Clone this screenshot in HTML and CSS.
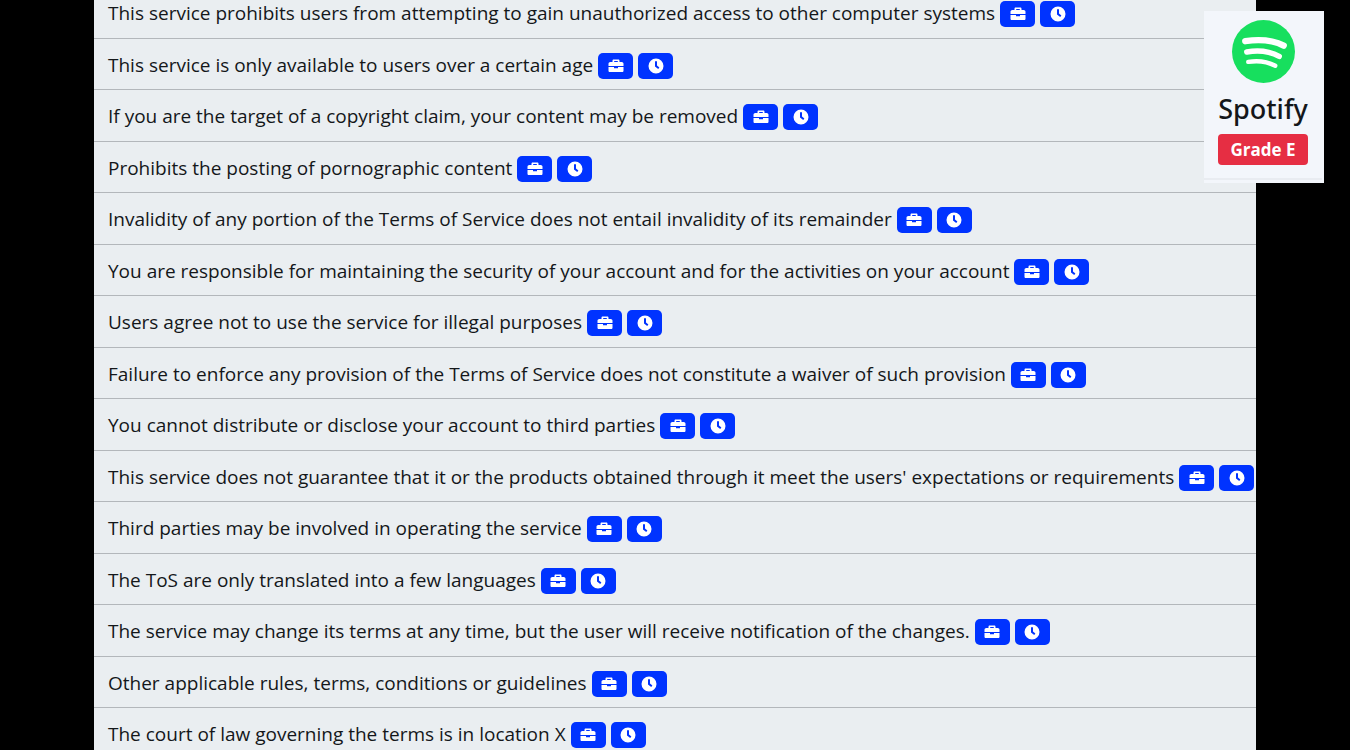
FILE: index.html
```
<!DOCTYPE html>
<html lang="en">
<head>
  <meta charset="UTF-8">
  <meta name="viewport" content="width=device-width, initial-scale=1.0">
  <title>Spotify - Terms of Service</title>
  <link rel="stylesheet" href="styles.css">
</head>
<body>
  <!-- Icons shared by all the points -->
  <svg class="icon-defs" xmlns="http://www.w3.org/2000/svg">
    <symbol id="briefcase" viewBox="0 0 16 16">
      <path fill-rule="evenodd" d="M4.500 4V2.700C4.500 2 5 1.500 5.700 1.500h4.600c.7 0 1.200.5 1.200 1.200V4h2.200c1 0 1.800.8 1.800 1.800V8H.5V5.800C.5 4.800 1.300 4 2.300 4zM6.200 4h3.600V3H6.200z" />
      <path d="M.5 9H6v1.200h4V9h5.500v3.700c0 .7-.5 1.300-1.300 1.300H1.800C1 14 .5 13.400.5 12.700z" />
    </symbol>
    <symbol id="clock" viewBox="0 0 16 16">
      <path fill-rule="evenodd" d="M8 .5a7.500 7.500 0 1 1 0 15 7.500 7.500 0 0 1 0-15zM7 3.300v5.200l3.200 2.400 1.200-1.500L9 7.600V3.300z" />
    </symbol>
  </svg>

  <ul class="points" id="pointList"></ul>

  <div class="service-card">
    <svg class="service-logo" viewBox="0 0 64 64" role="img" aria-label="Spotify logo">
      <circle cx="32" cy="32" r="32" fill="#17df5e" />
      <g fill="none" stroke="#fff" stroke-linecap="round">
        <path stroke-width="6.500" d="M13.500 21.500c14-2 27-1.600 39 4.500" />
        <path stroke-width="5.500" d="M15 32.500c12-2.200 22.500-1.200 33 4.500" />
        <path stroke-width="4.500" d="M16.500 42.500c10-1.600 18.500-.8 27.500 4" />
      </g>
    </svg>
    <h1 class="service-name">Spotify</h1>
    <span class="grade">Grade E</span>
  </div>

  <script>
    const points = [
      "This service prohibits users from attempting to gain unauthorized access to other computer systems",
      "This service is only available to users over a certain age",
      "If you are the target of a copyright claim, your content may be removed",
      "Prohibits the posting of pornographic content",
      "Invalidity of any portion of the Terms of Service does not entail invalidity of its remainder",
      "You are responsible for maintaining the security of your account and for the activities on your account",
      "Users agree not to use the service for illegal purposes",
      "Failure to enforce any provision of the Terms of Service does not constitute a waiver of such provision",
      "You cannot distribute or disclose your account to third parties",
      "This service does not guarantee that it or the products obtained through it meet the users' expectations or requirements",
      "Third parties may be involved in operating the service",
      "The ToS are only translated into a few languages",
      "The service may change its terms at any time, but the user will receive notification of the changes.",
      "Other applicable rules, terms, conditions or guidelines",
      "The court of law governing the terms is in location X"
    ];

    const pointList = document.getElementById("pointList");

    points.forEach((text) => {
      const item = document.createElement("li");
      item.className = "point";
      item.innerHTML = `
        <span class="point-text">${text}</span>
        <span class="badge"><svg><use href="#briefcase" /></svg></span>
        <span class="badge"><svg><use href="#clock" /></svg></span>
      `;
      pointList.appendChild(item);
    });
  </script>
</body>
</html>
```

FILE: styles.css
```
body {
  font-family: "Open Sans", "Noto Sans", sans-serif;
  margin: 0;
  height: 100vh;
  overflow: hidden;
  background-color: #000;
  color: #14171a;
}
.icon-defs {
  display: none;
}
/* The list starts scrolled a little under the top edge */
.points {
  list-style: none;
  margin: -13px 94px 0;
  padding: 0;
  background-color: #eaeef1;
}
.point {
  display: flex;
  align-items: center;
  gap: 5px;
  padding: 12px 0 10px 14px;
  border-bottom: 1px solid #b3b7bb;
  font-size: 19px;
  line-height: 1.5;
  white-space: nowrap;
}
.badge {
  display: flex;
  flex-shrink: 0;
  align-items: center;
  justify-content: center;
  width: 35px;
  height: 26px;
  margin-top: 2px;
  border-radius: 5px;
  background-color: #0033ff;
}
.badge svg {
  width: 16px;
  height: 16px;
  fill: #fff;
}

/* Service card that stays over the list */
.service-card {
  position: fixed;
  top: 11px;
  right: 26px;
  display: flex;
  flex-direction: column;
  align-items: center;
  box-sizing: border-box;
  width: 120px;
  padding: 9px 2px 3px 0;
  background-color: #f3f6fb;
}
.service-card::after {
  content: "";
  align-self: stretch;
  height: 2px;
  margin-top: 13px;
  background-color: #e9ecf1;
}
.service-logo {
  width: 63px;
  height: 63px;
}
.service-name {
  margin: 8px 0;
  font-family: "Noto Sans", sans-serif;
  font-size: 27px;
  font-weight: 500;
  line-height: 35px;
}
.grade {
  padding: 0 12px;
  border-radius: 4px;
  background-color: #e62e43;
  color: #fff;
  font-size: 17px;
  font-weight: 700;
  line-height: 31px;
}
```
